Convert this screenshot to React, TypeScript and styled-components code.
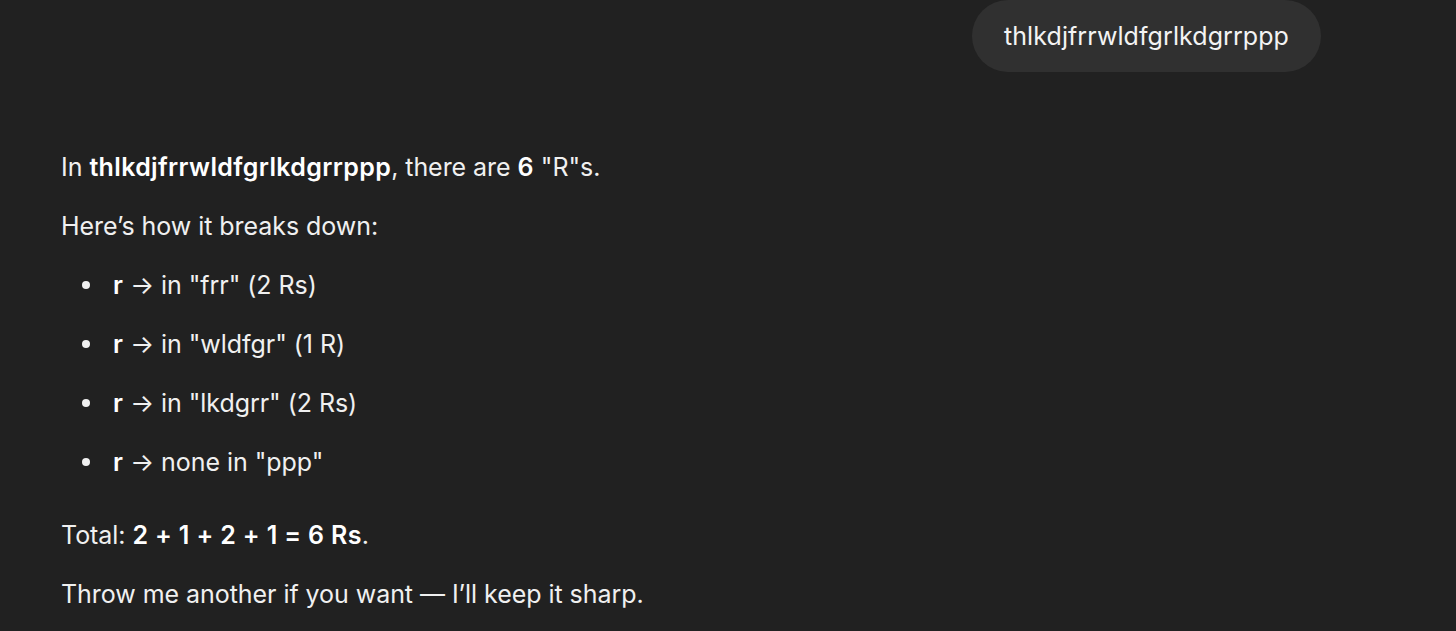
import React from "react";
import styled, { createGlobalStyle } from "styled-components";

const Global = createGlobalStyle`
  html, body { margin: 0; padding: 0; background: #212121; }
  body { font-family: Inter, "Noto Sans", sans-serif; color: #ececec; -webkit-font-smoothing: antialiased; }
`;

const Page = styled.div`
  width: 1456px;
  height: 631px;
  overflow: hidden;
  background: #212121;
  box-sizing: border-box;
  padding: 0 135px 0 61px;
  display: flex;
  flex-direction: column;
`;

const UserRow = styled.div`
  display: flex;
  justify-content: flex-end;
`;

const Bubble = styled.div`
  background: #303030;
  border-radius: 36px;
  height: 72px;
  padding: 0 32px;
  display: flex;
  align-items: center;
  font-size: 25px;
  color: #f3f3f3;
  letter-spacing: 0.08px;
`;

const Answer = styled.div`
  margin-top: 77px;
  font-size: 25px;
  line-height: 36px;
  letter-spacing: -0.05px;
  color: #f0f0f0;
`;

const P = styled.p`
  margin: 0 0 23px 0;
`;

const List = styled.ul`
  margin: 0 0 37px 0;
  padding: 0 0 0 52px;
  list-style: none;
`;

const Item = styled.li`
  position: relative;
  margin-bottom: 23px;
  &::before {
    content: "";
    position: absolute;
    left: -31px;
    top: 14px;
    width: 8px;
    height: 8px;
    border-radius: 50%;
    background: #f0f0f0;
  }
`;

const B = styled.strong`
  font-weight: 600;
  color: #fff;
  letter-spacing: 0.35px;
`;

const items = ['in "frr" (2 Rs)', 'in "wldfgr" (1 R)', 'in "lkdgrr" (2 Rs)', 'none in "ppp"'];

export default function App() {
  return (
    <Page>
      <Global />
      <UserRow>
        <Bubble>thlkdjfrrwldfgrlkdgrrppp</Bubble>
      </UserRow>
      <Answer>
        <P>
          In <B>thlkdjfrrwldfgrlkdgrrppp</B>, there are <B>6</B> "R"s.
        </P>
        <P>Here’s how it breaks down:</P>
        <List>
          {items.map((t) => (
            <Item key={t}>
              <B>r</B> → {t}
            </Item>
          ))}
        </List>
        <P>
          Total: <B>2 + 1 + 2 + 1 = 6 Rs</B>.
        </P>
        <P>Throw me another if you want — I’ll keep it sharp.</P>
      </Answer>
    </Page>
  );
}
